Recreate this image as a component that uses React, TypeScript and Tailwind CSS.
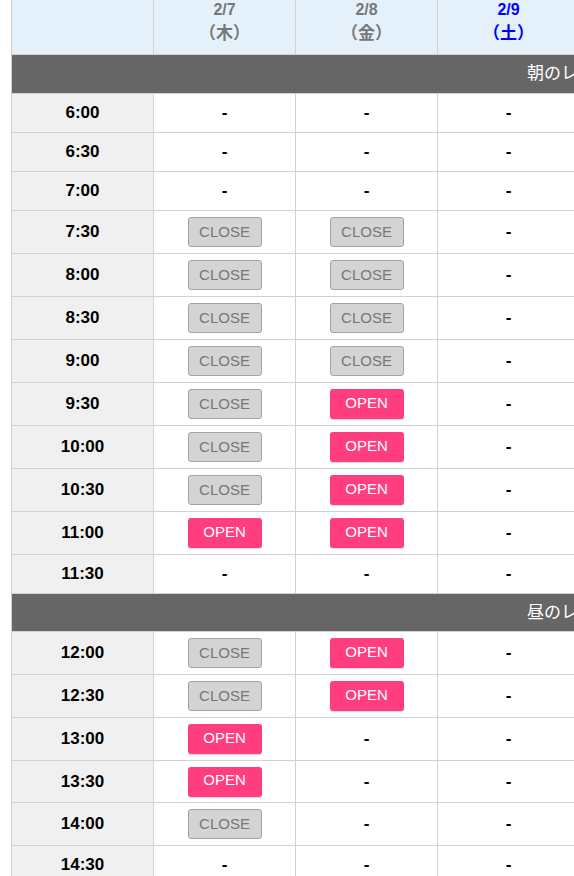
import React from "react";

type Cell = "-" | "C" | "O";
type Row = { time: string; cells: Cell[]; h?: string } | { section: string; h?: string };

const rows: Row[] = [
  { section: "朝のレッスン" },
  { time: "6:00", cells: ["-", "-", "-"] },
  { time: "6:30", cells: ["-", "-", "-"] },
  { time: "7:00", cells: ["-", "-", "-"] },
  { time: "7:30", cells: ["C", "C", "-"] },
  { time: "8:00", cells: ["C", "C", "-"] },
  { time: "8:30", cells: ["C", "C", "-"] },
  { time: "9:00", cells: ["C", "C", "-"] },
  { time: "9:30", cells: ["C", "O", "-"] },
  { time: "10:00", cells: ["C", "O", "-"] },
  { time: "10:30", cells: ["C", "O", "-"] },
  { time: "11:00", cells: ["O", "O", "-"] },
  { time: "11:30", cells: ["-", "-", "-"] },
  { section: "昼のレッスン" },
  { time: "12:00", cells: ["C", "O", "-"] },
  { time: "12:30", cells: ["C", "O", "-"] },
  { time: "13:00", cells: ["O", "-", "-"] },
  { time: "13:30", cells: ["O", "-", "-"], h: "h-[42px]" },
  { time: "14:00", cells: ["C", "-", "-"] },
  { time: "14:30", cells: ["-", "-", "-"] },
];

const days = [
  { d: "2/7", w: "（木）", blue: false },
  { d: "2/8", w: "（金）", blue: false },
  { d: "2/9", w: "（土）", blue: true },
  { d: "2/10", w: "（日）", blue: false },
  { d: "2/11", w: "（月）", blue: false },
  { d: "2/12", w: "（火）", blue: false },
  { d: "2/13", w: "（水）", blue: false },
];

function CellContent({ c }: { c: Cell }) {
  if (c === "C")
    return (
      <span className="flex h-[30px] w-[74px] items-center justify-center rounded-[3px] border border-[#a3a3a3] bg-[#d4d4d4] text-[15px] text-[#777777]">
        CLOSE
      </span>
    );
  if (c === "O")
    return (
      <span className="flex h-[30px] w-[74px] items-center justify-center rounded-[3px] bg-[#ff3d7f] pb-[2px] text-[15px] text-white shadow-[0_1px_1px_rgba(0,0,0,0.15)]">
        OPEN
      </span>
    );
  return <span className="text-[17px] font-bold text-black">-</span>;
}

export default function App() {
  return (
    <div
      className="w-[574px] h-[876px] overflow-hidden bg-white"
      style={{ fontFamily: '"Liberation Sans", Arial, "Noto Sans CJK JP", sans-serif' }}
    >
      <div className="pl-[11px]">
        <div className="w-[1137px] border-l border-[#d2d2d2]">
          {/* header */}
          <div className="flex h-[55px] border-b border-[#d2d2d2] bg-[#e4f1fb]">
            <div className="w-[142px] shrink-0 border-r border-[#d2d2d2]" />
            {days.map((day) => (
              <div
                key={day.d}
                className={`flex w-[142px] shrink-0 flex-col items-center justify-end border-r border-[#d2d2d2] pb-[8px] text-[16px] font-bold ${
                  day.blue ? "text-[#0000ff]" : "text-[#777777]"
                }`}
              >
                <span className="block h-[24px] leading-[24px]">{day.d}</span>
                <span className="block h-[24px] text-[17px] leading-[24px]">{day.w}</span>
              </div>
            ))}
          </div>
          {rows.map((r, i) => {
            if ("section" in r) {
              return (
                <div
                  key={i}
                  className={`flex ${i > 0 ? "h-[38px]" : "h-[39px]"} items-center justify-center border-b border-[#d2d2d2] bg-[#666666] pr-[4px] text-[17px] text-white`}
                >
                  {r.section}
                </div>
              );
            }
            const hasBtn = r.cells.some((c) => c !== "-");
            const h = r.h ? r.h : hasBtn ? "h-[43px]" : "h-[39px]";
            return (
              <div key={i} className={`flex ${h} border-b border-[#d2d2d2]`}>
                <div className="flex w-[142px] shrink-0 items-center justify-center border-r border-[#d2d2d2] bg-[#f0f0f0] text-[17px] font-bold text-black">
                  {r.time}
                </div>
                {[...r.cells, "-", "-", "-", "-"].map((c, j) => (
                  <div
                    key={j}
                    className="flex w-[142px] shrink-0 items-center justify-center border-r border-[#d2d2d2]"
                  >
                    <CellContent c={c as Cell} />
                  </div>
                ))}
              </div>
            );
          })}
        </div>
      </div>
    </div>
  );
}
